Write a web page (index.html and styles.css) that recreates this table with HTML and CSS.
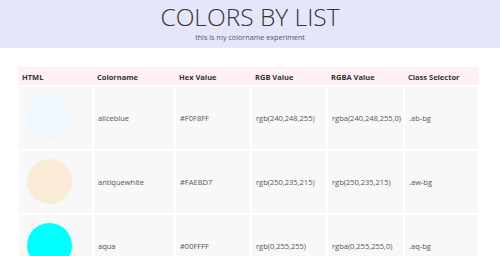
FILE: index.html
```html
<!DOCTYPE html>
<html lang="en">
<head>
    <meta charset="UTF-8">
    <title>Colors by List</title>
    <link rel="stylesheet" href="styles.css">
</head>
<body>
    <header class="masthead">
        <h1>COLORS BY LIST</h1>
        <p>this is my colorname experiment</p>
    </header>

    <table class="color-table">
        <colgroup>
            <col class="c-html">
            <col class="c-name">
            <col class="c-hex">
            <col class="c-rgb">
            <col class="c-rgba">
            <col class="c-class">
        </colgroup>
        <thead>
            <tr>
                <th>HTML</th>
                <th>Colorname</th>
                <th>Hex Value</th>
                <th>RGB Value</th>
                <th>RGBA Value</th>
                <th>Class Selector</th>
            </tr>
        </thead>
        <tbody>
            <tr>
                <td><div class="swatch ab-bg"></div></td>
                <td>aliceblue</td>
                <td>#F0F8FF</td>
                <td>rgb(240,248,255)</td>
                <td>rgba(240,248,255,0)</td>
                <td>.ab-bg</td>
            </tr>
            <tr>
                <td><div class="swatch aw-bg"></div></td>
                <td>antiquewhite</td>
                <td>#FAEBD7</td>
                <td>rgb(250,235,215)</td>
                <td>rgb(250,235,215)</td>
                <td>.aw-bg</td>
            </tr>
            <tr>
                <td><div class="swatch aq-bg"></div></td>
                <td>aqua</td>
                <td>#00FFFF</td>
                <td>rgb(0,255,255)</td>
                <td>rgba(0,255,255,0)</td>
                <td>.aq-bg</td>
            </tr>
        </tbody>
    </table>
</body>
</html>
```

FILE: styles.css
```css
body {
    margin: 0;
    font-family: "Open Sans", Arial, sans-serif;
    color: #555;
    background: #fff;
}

/* top banner */
.masthead {
    background: #e6e6fa; /* lavender */
    height: 48px;
    text-align: center;
}
.masthead h1 {
    margin: 0;
    padding-top: 3px;
    font-size: 24.5px;
    font-weight: 300;
    line-height: 27px;
    color: #333;
}
.masthead p {
    margin: 2px 0 0;
    font-size: 7.2px;
    line-height: 10px;
    color: #555;
}

/* table */
.color-table {
    margin: 19px 0 0 18px;
    width: 461px;
    table-layout: fixed;
    border-collapse: separate;
    border-spacing: 0;
    font-size: 7.5px;
}
.c-html  { width: 75px; }
.c-name  { width: 82px; }
.c-hex   { width: 76px; }
.c-rgb   { width: 76px; }
.c-rgba  { width: 77px; }
.c-class { width: 75px; }

.color-table th {
    background: #fff0f5; /* lavenderblush */
    border: 1px solid #fff0f5;
    border-bottom-color: #fff;
    padding: 0 3px;
    height: 17px;
    text-align: left;
    font-weight: 700;
    color: #333;
}
.color-table td {
    background: #f8f8f8;
    border: 1px solid #fff;
    padding: 8px 4px 9px 4px;
    vertical-align: middle;
}
.color-table td:first-child {
    padding-left: 8px;
}

.swatch {
    width: 45px;
    height: 45px;
    border-radius: 50%;
}
.ab-bg { background: #f0f8ff; }
.aw-bg { background: #faebd7; }
.aq-bg { background: #00ffff; }
```
